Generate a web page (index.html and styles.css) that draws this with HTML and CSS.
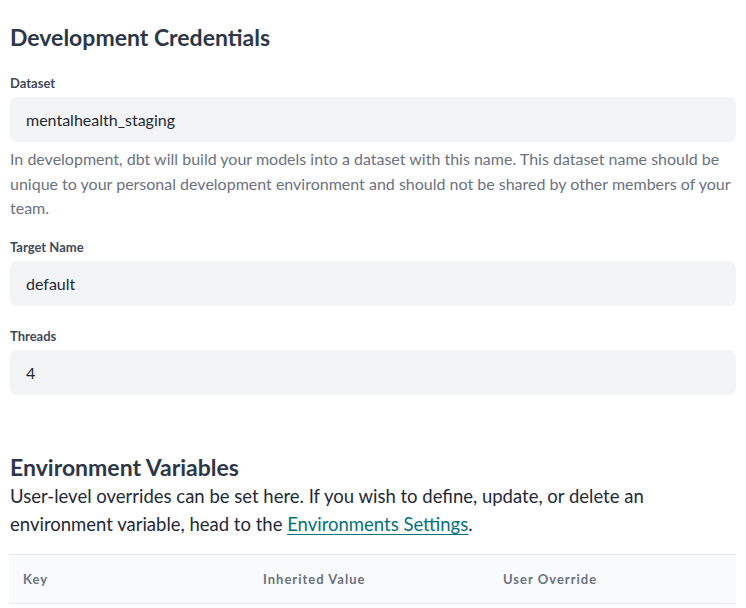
FILE: index.html
```html
<!DOCTYPE html>
<html lang="en">
<head>
<meta charset="utf-8">
<title>Development Credentials</title>
<link rel="stylesheet" href="styles.css">
</head>
<body>
<main class="page">
  <section class="creds">
    <h2 class="title">Development Credentials</h2>
    <div class="field field-help">
      <label class="label">Dataset</label>
      <div class="input">mentalhealth_staging</div>
      <p class="help">In development, dbt will build your models into a dataset with this name. This dataset name should be unique to your personal development environment and should not be shared by other members of your team.</p>
    </div>
    <div class="field">
      <label class="label">Target Name</label>
      <div class="input">default</div>
    </div>
    <div class="field">
      <label class="label">Threads</label>
      <div class="input">4</div>
    </div>
  </section>
  <section class="env">
    <h2 class="title">Environment Variables</h2>
    <p class="desc">User-level overrides can be set here. If you wish to define, update, or delete an environment variable, head to the <a class="link" href="#">Environments Settings</a>.</p>
    <div class="table">
      <div class="thead">
        <div class="th">Key</div>
        <div class="th">Inherited Value</div>
        <div class="th">User Override</div>
      </div>
    </div>
  </section>
</main>
</body>
</html>
```
FILE: styles.css
```css
html, body {
  margin: 0;
  padding: 0;
  background: #ffffff;
}
body {
  font-family: Lato, "Liberation Sans", sans-serif;
  color: #1f2937;
}
.page {
  padding: 22px 10px 0 10px;
}
.title {
  margin: 0;
  font-size: 23px;
  font-weight: 700;
  line-height: 30px;
  color: #2d3748;
}
.creds .title {
  margin-bottom: 22px;
}
.field {
  display: flex;
  flex-direction: column;
  margin-bottom: 21.5px;
}
.field-help {
  margin-bottom: 17px;
}
.field:last-child {
  margin-bottom: 0;
}
.label {
  font-size: 13px;
  font-weight: 700;
  line-height: 18px;
  color: #3f4a5a;
  margin-bottom: 5px;
}
.input {
  height: 45px;
  box-sizing: border-box;
  padding: 0 16px;
  display: flex;
  align-items: center;
  background: #f3f4f6;
  border-radius: 7px;
  font-size: 16px;
  color: #1f2937;
}
.help {
  margin: 5px 0 0 0;
  font-size: 16px;
  line-height: 24.5px;
  color: #6b7280;
}
.env {
  margin-top: 57px;
}
.desc {
  margin: 0 0 16px 0;
  font-size: 18.5px;
  line-height: 28px;
  color: #1f2937;
}
.link {
  color: #047377;
  text-decoration: underline;
  text-underline-offset: 3px;
}
.table {
  margin-left: -1px;
  border-top: 1px solid #e5e7eb;
  border-bottom: 1px solid #e5e7eb;
  background: #f9fafb;
}
.thead {
  display: grid;
  grid-template-columns: 240px 240px 1fr;
  height: 48px;
  align-items: center;
  padding-left: 14px;
}
.th {
  font-size: 13px;
  font-weight: 700;
  letter-spacing: 1px;
  color: #6b7280;
}
```
